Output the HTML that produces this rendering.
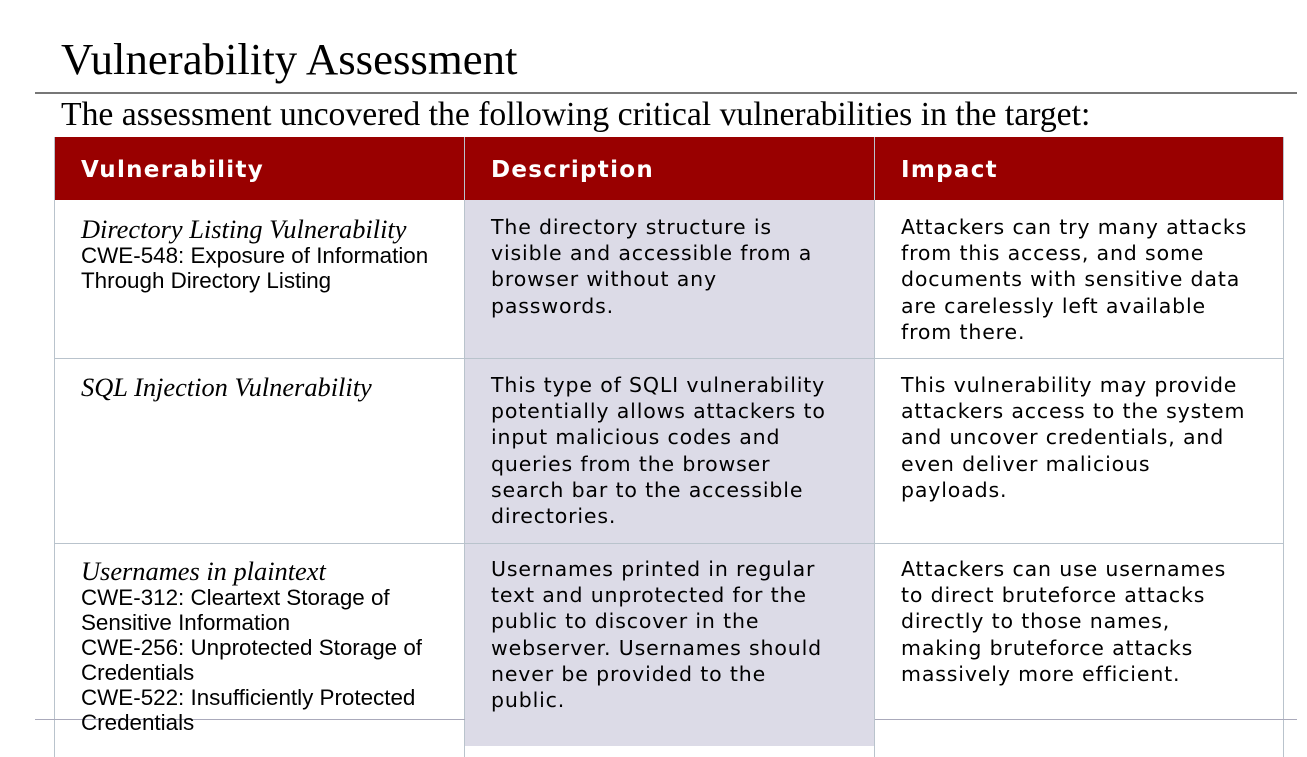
<!DOCTYPE html>
<html><head><meta charset="utf-8"><style>
body{margin:0;width:1307px;height:746px;overflow:hidden;background:#fff;position:relative;font-family:"DejaVu Sans",sans-serif}
.a{position:absolute;white-space:nowrap}
.t{font-family:"Liberation Serif",serif;font-size:44.8px;left:61px;top:33px;color:#000}
.s{font-family:"Liberation Serif",serif;font-size:33.7px;left:61px;top:96px;color:#000}
.hl{position:absolute;height:2px;background:#888}
.col{position:absolute;top:137px;height:620px;border-left:1px solid #b9c3cc}
.hd{position:absolute;top:137px;left:55px;width:1228px;height:63px;background:#990000}
.h{color:#fff;font-weight:bold;font-size:23px;letter-spacing:1.3px;top:157px}
.b{font-size:20.5px;line-height:26.2px;letter-spacing:0.85px;color:#000}
.i{font-family:"Liberation Serif",serif;font-style:italic;font-size:26.4px;line-height:27px}
.c{font-family:"Liberation Sans",sans-serif;font-size:22.4px;line-height:25px}
.row{position:absolute;left:55px;width:1228px;height:1px;background:#b9c3cc}
</style></head><body>
<div class="a t">Vulnerability Assessment</div>
<div class="hl" style="left:35px;top:92px;width:1262px;background:#777"></div>
<div class="a s">The assessment uncovered the following critical vulnerabilities in the target:</div>
<div style="position:absolute;left:465px;top:200px;width:410px;height:546px;background:#dcdbe7"></div>
<div class="hd"></div>
<div class="col" style="left:54px"></div>
<div class="col" style="left:464px"></div>
<div class="col" style="left:874px"></div>
<div class="col" style="left:1283px"></div>
<div class="row" style="top:358px"></div>
<div class="row" style="top:543px"></div>
<div class="hl" style="left:35px;top:719px;width:430px;height:1px;background:#aab"></div>
<div class="hl" style="left:875px;top:719px;width:422px;height:1px;background:#aab"></div>
<div class="a h" style="left:81px">Vulnerability</div>
<div class="a h" style="left:491px">Description</div>
<div class="a h" style="left:901px">Impact</div>

<div class="a" style="left:81px;top:216px"><div class="i">Directory Listing Vulnerability</div><div class="c">CWE-548: Exposure of Information<br>Through Directory Listing</div></div>
<div class="a b" style="left:491px;top:214px">The directory structure is<br>visible and accessible from a<br>browser without any<br>passwords.</div>
<div class="a b" style="left:901px;top:214px">Attackers can try many attacks<br>from this access, and some<br>documents with sensitive data<br>are carelessly left available<br>from there.</div>

<div class="a i" style="left:81px;top:374px">SQL Injection Vulnerability</div>
<div class="a b" style="left:491px;top:372px">This type of SQLI vulnerability<br>potentially allows attackers to<br>input malicious codes and<br>queries from the browser<br>search bar to the accessible<br>directories.</div>
<div class="a b" style="left:901px;top:372px">This vulnerability may provide<br>attackers access to the system<br>and uncover credentials, and<br>even deliver malicious<br>payloads.</div>

<div class="a" style="left:81px;top:558px"><div class="i">Usernames in plaintext</div><div class="c">CWE-312: Cleartext Storage of<br>Sensitive Information<br>CWE-256: Unprotected Storage of<br>Credentials<br>CWE-522: Insufficiently Protected<br>Credentials</div></div>
<div class="a b" style="left:491px;top:556px">Usernames printed in regular<br>text and unprotected for the<br>public to discover in the<br>webserver. Usernames should<br>never be provided to the<br>public.</div>
<div class="a b" style="left:901px;top:556px">Attackers can use usernames<br>to direct bruteforce attacks<br>directly to those names,<br>making bruteforce attacks<br>massively more efficient.</div>
</body></html>
